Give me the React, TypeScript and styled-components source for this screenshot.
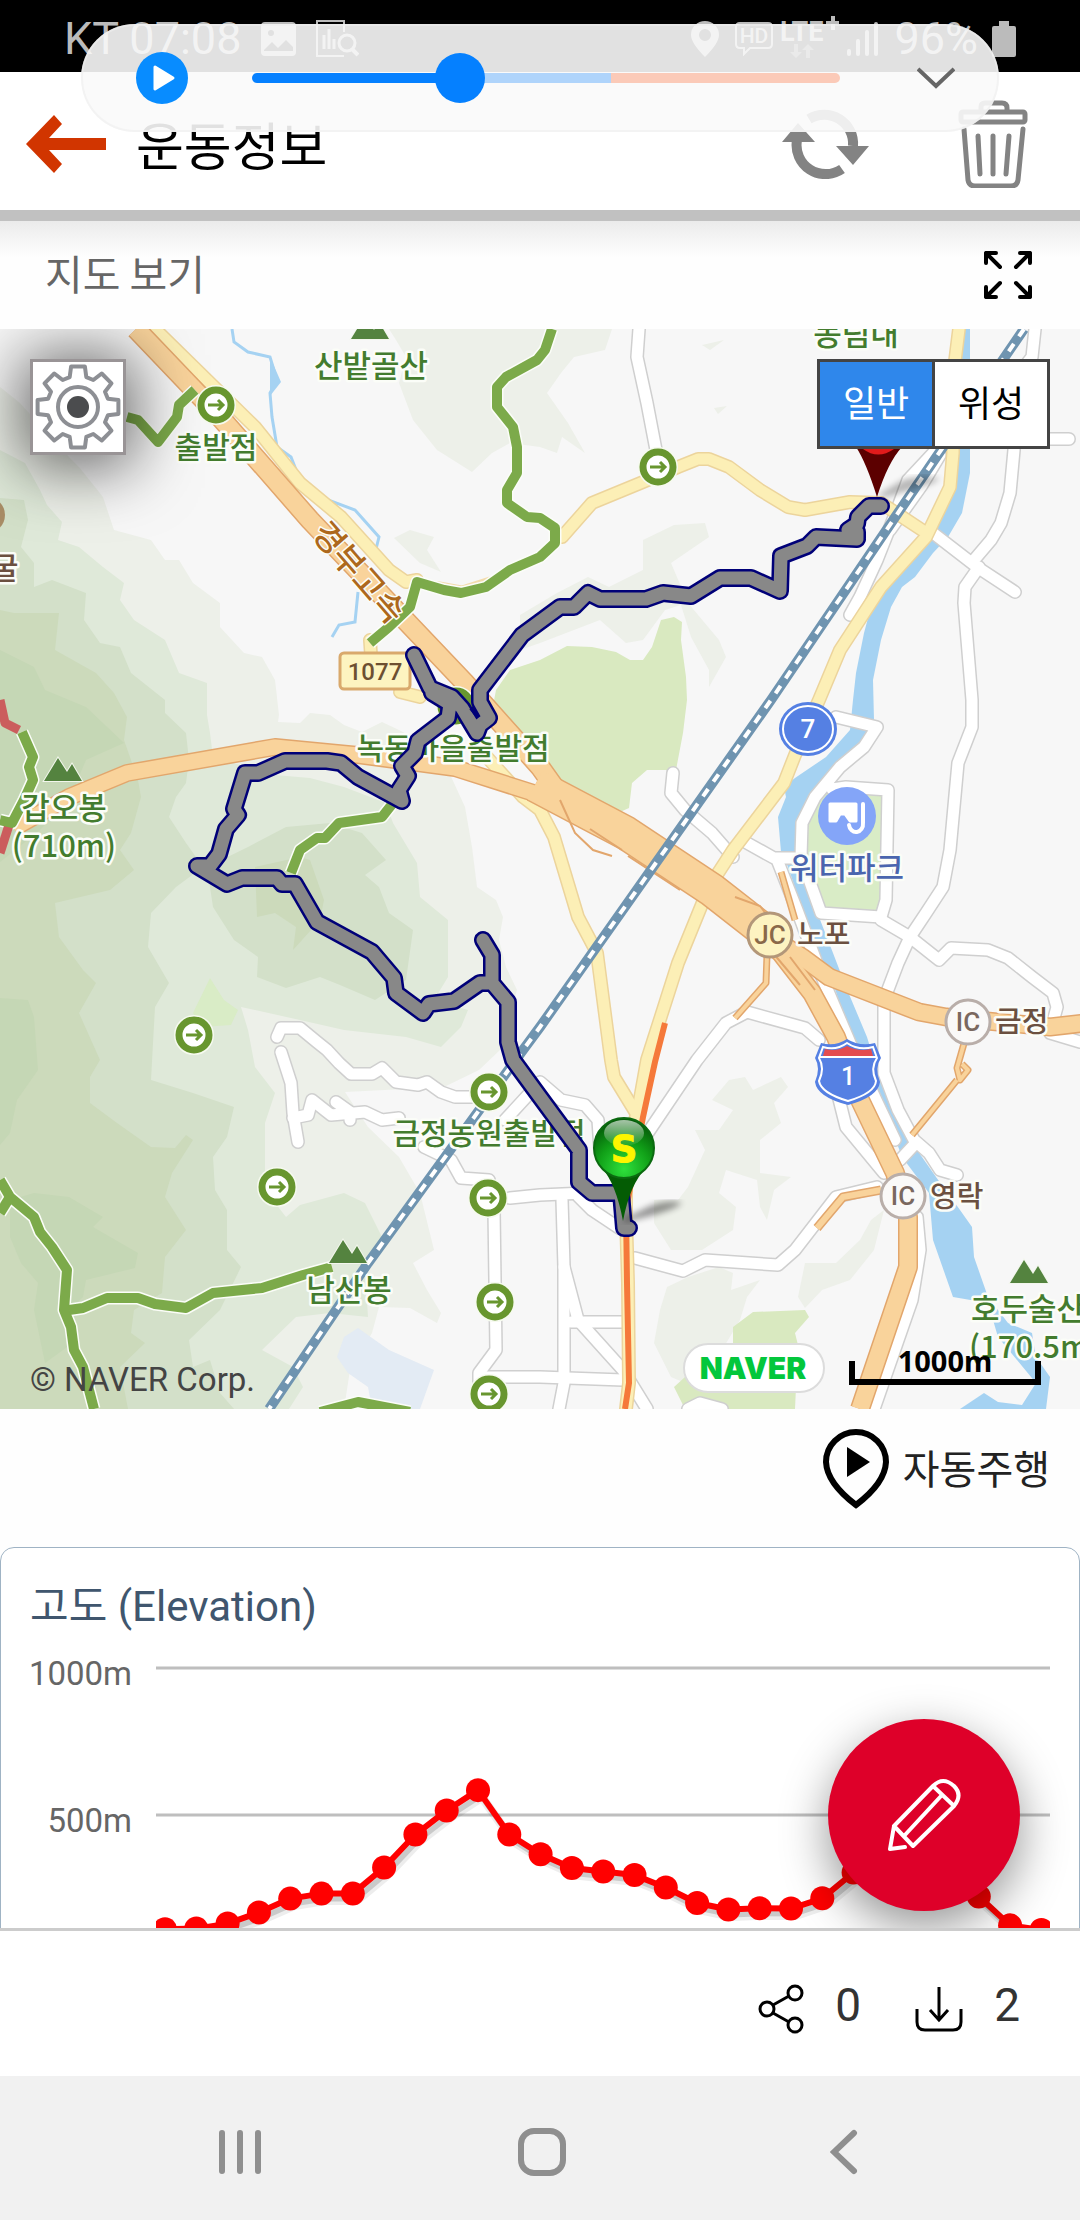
import React, { useState } from 'react';
import styled, { createGlobalStyle } from 'styled-components';

const SANS = `Roboto, "Noto Sans CJK KR", sans-serif`;
const KOREAN = `"Noto Sans CJK KR", Roboto, sans-serif`;

const GlobalStyle = createGlobalStyle`
  * { box-sizing: border-box; }
  body { margin: 0; background: #fefefe; font-family: ${SANS}; color: #222; }
  button { font: inherit; color: inherit; background: none; border: 0; padding: 0; cursor: pointer; }
  svg { display: block; flex: none; }
`;

/* ---------- layout ---------- */

const Screen = styled.div`
  position: relative;
  display: flex;
  flex-direction: column;
  height: 100vh;
  overflow: hidden;
`;

const StatusBar = styled.div`
  display: flex;
  justify-content: space-between;
  align-items: center;
  height: 72px;
  flex: none;
  padding: 6px 64px 0;
  background: #000;
  color: #bbb;
  font-size: 45px;
  line-height: 48px;
`;

const StatusGroup = styled.div<{ $gap: number }>`
  display: flex;
  align-items: center;
  gap: ${(p) => p.$gap}px;
`;

const Player = styled.div`
  position: absolute;
  z-index: 5;
  top: 24px;
  left: 81px;
  right: 81px;
  height: 108px;
  display: flex;
  align-items: center;
  padding: 0 44px 0 55px;
  border-radius: 54px;
  background: rgba(250, 250, 250, 0.9);
  box-shadow: inset 0 0 0 2px rgba(238, 238, 238, 0.6);
`;

const Seek = styled.input`
  flex: 1;
  min-width: 0;
  height: 50px;
  margin: 0 77px 0 64px;
  background: none;
  appearance: none;
  &::-webkit-slider-runnable-track {
    height: 10px;
    border-radius: 5px;
    background: linear-gradient(to right, #0580ff 36%, #afd4fb 36%, #afd4fb 61%, #fbcab8 61%);
  }
  &::-webkit-slider-thumb {
    appearance: none;
    width: 50px;
    height: 50px;
    margin-top: -20px;
    border-radius: 50%;
    background: #0580ff;
  }
`;

const Header = styled.header`
  display: flex;
  align-items: center;
  flex: none;
  height: 149px;
  padding: 6px 52px 0 26px;
  border-bottom: 11px solid #c1c1c1;
  background: #fff;
`;

const Title = styled.h1`
  flex: 1;
  margin: 0 0 0 30px;
  font: 400 52px/60px ${KOREAN};
  color: #000;
`;

const HeaderActions = styled.div`
  display: flex;
  align-items: center;
  gap: 89px;
`;

const Content = styled.main`
  position: relative;
  flex: 1;
  min-height: 0;
  overflow: hidden;
  background: linear-gradient(#ebebeb, #fefefe 36px);
`;

const SectionBar = styled.div`
  display: flex;
  align-items: center;
  justify-content: space-between;
  height: 108px;
  padding: 0 48px 0 45px;
`;

const SectionTitle = styled.h2`
  margin: 0;
  padding-bottom: 6px;
  font: 400 41px/48px ${KOREAN};
  color: #666;
`;

const MapFrame = styled.section`
  position: relative;
  overflow: hidden;
  aspect-ratio: 1;
  background: #f7f7f7;
`;

const GearButton = styled.button`
  && { border: 3px solid #999496; background: #fff; }
  position: absolute;
  top: 30px;
  left: 30px;
  width: 96px;
  height: 96px;
  box-shadow: 0 4px 64px 8px rgba(0, 0, 0, 0.6);
`;

const MapTypes = styled.div`
  position: absolute;
  top: 30px;
  right: 30px;
  display: flex;
  gap: 3px;
  border: 3px solid #444;
  background: #444;
`;

const MapType = styled.button<{ $on?: boolean }>`
  width: 112px;
  height: 84px;
  && {
    padding-bottom: 6px;
    background: ${(p) => (p.$on ? '#2f87eb' : '#fff')};
    color: ${(p) => (p.$on ? '#fff' : '#000')};
    font: 400 36px/48px ${KOREAN};
  }
`;

const Copyright = styled.div`
  position: absolute;
  left: 30px;
  bottom: 9px;
  font-size: 33px;
  line-height: 40px;
  color: #444;
`;

const AutoRow = styled.div`
  display: flex;
  justify-content: flex-end;
  padding: 20px 30px 38px;
`;

const AutoButton = styled.button`
  display: flex;
  align-items: center;
  gap: 14px;
  && { font: 400 40px/80px ${KOREAN}; }
  span { margin-bottom: 4px; line-height: 76px; }
`;

const Card = styled.section`
  height: 460px;
  padding-top: 33px;
  border: 1px solid #9fb3c4;
  border-radius: 14px;
  background: #fff;
`;

const CardTitle = styled.h2`
  margin: 0 0 0 29px;
  font: 400 42px/52px ${SANS};
  color: #40566e;
`;

const ChartSvg = styled.svg`
  width: 100%;
  height: auto;
`;

const EditButton = styled.button`
  position: absolute;
  right: 60px;
  bottom: 17px;
  width: 192px;
  height: 192px;
  display: grid;
  place-items: center;
  && { border-radius: 50%; background: #de0029; }
  box-shadow: 0 16px 48px rgba(0, 0, 0, 0.42);
`;

const Footer = styled.footer`
  display: flex;
  justify-content: flex-end;
  align-items: center;
  gap: 54px;
  flex: none;
  height: 148px;
  padding: 10px 60px 0 0;
  border-top: 3px solid #ccc;
  background: #fff;
`;

const Count = styled.button`
  display: flex;
  align-items: center;
  gap: 31px;
  && { font-size: 46px; line-height: 56px; color: #333; }
  span { margin-bottom: 8px; }
`;

const SystemNav = styled.nav`
  display: grid;
  grid-template-columns: repeat(3, 1fr);
  place-items: center;
  flex: none;
  height: 144px;
  padding: 8px 85px 0 89px;
  background: #f1f1f1;
`;

/* ---------- map ---------- */

type P = { d: string; c: string };

const AREAS: P[] = [
  { c: '#edf0e9', d: 'M0 387L20 403L69 457L79 467L103 497L114 530L151 540L165 560L179 560L193 583L220 603L220 627L244 653L262 657L275 680L279 715L278 722L300 723L310 713L330 715L344 725L362 732L382 722L399 730L424 743L448 770L465 807L472 847L477 887L496 900L503 917L499 940L506 967L517 990L500 1050L479 1070L444 1087L345 1092L368 1127L399 1157L420 1193L434 1250L413 1263L427 1290L441 1313L437 1323L410 1308L379 1307L372 1333L350 1370L344 1409L0 1409Z' },
  { c: '#dfe9d9', d: 'M0 450L25 463L40 490L47 505L62 522L58 540L79 547L103 567L124 583L120 600L134 620L165 640L179 673L207 683L207 715L210 733L213 757L275 775L310 778L344 787L386 803L393 823L417 863L420 897L448 920L448 977L434 1000L468 1010L461 1027L441 1047L406 1037L344 1030L300 1020L241 1007L248 1030L255 1067L275 1093L265 1123L265 1190L286 1217L300 1205L344 1193L365 1203L382 1237L365 1270L368 1317L330 1313L296 1317L262 1350L293 1367L303 1387L289 1409L0 1409Z' },
  { c: '#d3e0c9', d: 'M0 498L24 500L28 520L21 547L34 563L34 587L52 580L86 593L84 620L100 643L120 647L131 673L165 700L165 713L186 733L189 760L186 783L176 797L169 817L186 843L203 867L176 887L151 913L148 947L169 983L155 1007L151 1080L193 1093L234 1107L227 1137L213 1157L215 1190L227 1210L227 1250L241 1267L220 1310L189 1340L193 1367L210 1360L220 1393L234 1409L0 1409Z' },
  { c: '#d3e0c9', d: 'M207 867L213 907L234 940L258 957L257 977L286 988L320 977L340 985L375 1000L406 980L413 930L389 913L379 887L365 875L386 860L362 833L330 823L286 827L248 847Z' },
  { c: '#ccdabb', d: 'M0 610L14 613L59 613L55 650L96 673L114 693L127 717L124 740L138 780L141 797L131 833L120 850L134 870L110 890L55 903L59 937L83 970L96 983L79 1013L100 1060L90 1077L90 1103L117 1123L151 1147L175 1148L186 1135L193 1140L172 1173L165 1197L186 1230L165 1257L162 1293L134 1310L131 1333L145 1343L120 1367L128 1409L0 1409Z' },
  { c: '#ccdabb', d: 'M255 867L300 857L310 860L324 900L320 920L293 950L296 927L275 913L257 917Z' },
  { c: '#c5d7b5', d: 'M0 650L34 667L45 690L86 707L124 743L86 760L69 800L40 830L0 862Z' },
  { c: '#c5d7b5', d: 'M0 998L28 1000L34 1017L38 1070L17 1100L10 1133L0 1145Z' },
  { c: '#c5d7b5', d: 'M10 1200L34 1193L69 1197L103 1217L93 1227L138 1253L135 1268L86 1280L83 1297L62 1317L70 1345L45 1363L34 1310L38 1283L21 1263L10 1237Z' },
  { c: '#edf0e9', d: 'M389 329L396 340L406 357L399 383L413 420L437 450L472 472L492 453L510 443L540 447L557 453L562 437L585 453L568 423L547 393L561 373L574 357L605 350L612 329Z' },
  { c: '#edf0e9', d: 'M394 538L410 530L434 537L427 550L441 572L420 563Z' },
  { c: '#edf0e9', d: 'M643 540L674 525L705 523L709 537L671 563L688 603L719 640L726 657L709 687L709 670L691 637L681 605L665 610L643 640L626 643L600 620L540 643L520 650L520 615L557 593L588 577L609 587L643 570Z' },
  { c: '#edf0e9', d: 'M702 345L724 340L710 350Z M714 408L727 406L718 414Z' },
  { c: '#d9e9c0', d: 'M496 690L510 670L540 660L567 646L592 647L616 652L630 660L643 660L652 647L661 620L674 617L682 622L681 640L686 677L687 700L683 733L676 770L647 770L632 783L629 808L609 817L588 797L557 783L540 767L490 722Z' },
  { c: '#d9ecc6', d: 'M822 793H884L884 875L877 912L822 910L805 860V833Z' },
  { c: '#edf0e9', d: 'M688 1277L719 1267L733 1273L731 1290L760 1280L747 1297L740 1320L725 1345L690 1385L671 1377L654 1343L660 1310L667 1287Z' },
  { c: '#edf0e9', d: 'M729 1080L745 1077L753 1090L781 1077L788 1087L774 1103L781 1123L760 1140L760 1173L791 1177L774 1190L767 1220L760 1207L757 1180L726 1170L719 1193L736 1207L733 1230L702 1250L671 1250L654 1223V1200L678 1200L688 1187L705 1150L695 1130L719 1130L733 1110L712 1100Z' },
  { c: '#edf0e9', d: 'M798 1297L805 1263L836 1263L860 1240L871 1220L884 1210L874 1250L850 1280L822 1290L805 1308Z' },
  { c: '#d9e9c0', d: 'M733 1327L753 1312L805 1310L809 1317L795 1333L798 1345L795 1409H685L674 1387L685 1377L700 1350L733 1345Z' },
  { c: '#e3ebf4', d: 'M337 1357L344 1337L358 1328L389 1350L434 1370L420 1409H372L368 1387L348 1373Z' },
  { c: '#d9ecc6', d: 'M210 978L224 1000L238 1010L231 1025L203 1027L193 1013Z' },
  { c: '#a5d2f2', d: 'M960 329H970L970 473L962 513L948 537L933 553L915 577L902 587L891 607L881 640L873 680L874 720L864 740L833 770L809 800L798 827L795 863L803 880L819 917L833 953L846 987L867 1037L881 1083L907 1137L922 1157L936 1177L960 1210L972 1227L974 1257L988 1297L1008 1323L1032 1333L1036 1357L1050 1377L1046 1409H960L984 1393L998 1402L1022 1405L1036 1383L998 1337L988 1303L953 1297L933 1240L929 1193L902 1157L876 1087L853 1043L833 983L815 947L788 867L781 852L778 817L786 797L784 787L795 778L826 757L850 730L853 700L856 673L864 633L871 607L881 587L915 545L950 487Z' },
];

const STREAMS = [
  'M232 329L234 342L248 352L270 357L277 380L270 393L272 417L277 447L291 457L300 480L320 497L355 510L379 537L375 553',
  'M358 592L355 622L339 625L332 637',
];

const WHITE_ROADS = [
  'M639 329L637 357L647 403L656 450',
  'M1035 329L1032 357L1014 380V450L1010 493L1001 523L991 540L974 560',
  'M1040 439H1069',
  'M933 533L977 567L1015 592',
  'M979 567L965 587L964 603L972 700V727L958 763L950 850L943 887L926 913L910 937L898 963L884 1000V1073L898 1110L914 1140L929 1153L940 1170L957 1175',
  'M914 1145L900 1160',
  'M936 450L908 480L898 507L877 560L860 597L850 615',
  'M940 455L922 485L890 530',
  'M836 717L877 727L864 747L840 767L815 797L802 823L801 857L821 913L881 917L886 900L888 790L846 787L832 789',
  'M673 773L671 793L685 810L712 833L733 857',
  'M747 843L774 858H795',
  'M778 862L797 910L822 977L850 1043L876 1100L895 1140',
  'M881 920L910 937L939 960L951 948L988 950L1008 958L1032 977L1053 993L1057 1007L1050 1033L1080 1042',
  'M819 1040L805 1028L747 1012L726 1023L697 1060L643 1140',
  'M838 1095L846 1127L884 1173',
  'M635 1258L683 1271L705 1260L778 1265L795 1250L836 1197L877 1187',
  'M917 1217L920 1250L912 1300L874 1409',
  'M510 1198L540 1195L585 1193',
  'M578 1196L592 1210L619 1228',
  'M562 1200L564 1267V1383L559 1409',
  'M564 1267L578 1320L623 1370L647 1409',
  'M571 1322H623',
  'M482 1377H540L623 1380',
  'M494 1210L496 1350L479 1373V1390',
  'M424 1147L451 1160L461 1178L489 1180',
  'M277 1037L281 1028L300 1028L317 1042L327 1050L339 1063L351 1074H372L382 1068L396 1082L418 1085L427 1082L441 1092L455 1097H472',
  'M281 1052L291 1083L293 1113L298 1142',
  'M293 1118L308 1115L312 1100L331 1115L365 1112L382 1120L399 1118',
  'M336 1102L350 1112V1120',
  'M505 1120L540 1082L561 1100L585 1105L598 1120L600 1150',
  'M688 1409L700 1403L722 1409',
];

const YELLOW_ROADS = [
  'M155 329L255 427L300 483L341 517L389 570L406 582L417 580',
  'M562 537L592 503L643 482L678 467L698 459H709L729 467L760 490L788 507L805 510L850 502L881 503L922 530',
  'M959 329L953 377V453L950 487L926 537L881 587L840 650L819 700L797 750L784 783L733 850L709 887L678 963L647 1060L638 1110L626 1150V1217L628 1283L629 1383L626 1409',
  'M485 755L523 797L540 810L554 837L578 917L597 953L611 1060L614 1077L636 1113',
  'M370 640L371 655',
  'M400 692L420 697',
];

const HIGHWAYS: { d: string; w: number }[] = [
  { d: 'M767 955L766 983L735 1018', w: 4 },
  { d: 'M781 872L795 920', w: 4 },
  { d: 'M965 1040L957 1068L960 1080L968 1070L962 1064M957 1080L912 1135', w: 4 },
  { d: 'M881 1190L843 1197L817 1228', w: 6 },
  { d: 'M14 828L69 797L127 773L275 747L358 755L455 768L540 795', w: 15 },
  { d: 'M136 329L220 417L310 520L465 683L540 767L560 795', w: 18 },
  { d: 'M535 785L626 833L712 890L767 933', w: 32 },
  { d: 'M752 925L802 957L829 977L919 1012L946 1017L1050 1027L1085 1023', w: 16 },
  { d: 'M755 930L781 953L812 993L836 1037L860 1100L895 1173L908 1217V1267L860 1409', w: 17 },
];

const TRAILS = [
  'M127 417L138 420L158 442L177 417L179 405L195 390',
  'M552 329L545 350L537 360L506 377L497 387V407L513 427L517 447V473L507 490V503L527 517L540 518L555 528V543L540 557L510 570L486 587L461 593L444 590L417 582L410 607L389 627L370 643',
  'M291 873L300 850L317 838H325L339 823L382 817L393 803',
  'M22 732L33 757L29 767L33 780L24 800L12 823L0 820',
  'M0 1180L10 1197L34 1217L40 1232L52 1247L67 1270L64 1310L71 1327L74 1350L83 1367L94 1409',
  'M0 1213L10 1197',
  'M69 1310L83 1308L107 1298H138L155 1304L186 1308L213 1293L262 1288L303 1275L332 1267',
  'M320 1412L358 1402L410 1412',
];

const RED_TRAILS = ['M0 700L5 723L19 730', 'M9 825L0 853'];

const RAILWAY = 'M1024 329L900 510L771 700L540 1027L523 1050L368 1263L269 1409';

const ROUTE =
  'M881 506H869L858 517L857 524L848 530M856 537L857 539L816 537L807 546L781 556L780 591L751 578H720L691 596L663 593L646 599H600L588 593L574 607H560L522 635L480 690V702L489 718L480 725L477 733L462 708L452 697L430 688L414 655' +
  'M432 693L450 704L448 718L418 741L415 753L402 766L408 776L399 790L402 801L358 777L341 763L327 761H285L258 773H245L234 809L238 815L226 829L219 854L210 866H197L227 884L242 878H277L282 884H295L317 922L372 952L394 978L396 993L423 1013L429 1004L454 1001L480 983H491' +
  'M483 940L492 955V983L508 1002V1042L513 1060L540 1097L579 1150V1182L592 1193H621L624 1228H629M848 530L857 532V538';

const GREEN = '#437c2e';
const BROWN = '#6b5040';

const LABELS: { t: string; x: number; y: number; c: string; s?: number; a?: 'start' | 'middle' }[] = [
  { t: '산밭골산', x: 371, y: 377, c: GREEN },
  { t: '출발점', x: 216, y: 458, c: GREEN, s: 30 },
  { t: '동림내', x: 856, y: 345, c: GREEN },
  { t: '굴', x: -10, y: 579, c: BROWN, a: 'start' },
  { t: '갑오봉', x: 64, y: 819, c: GREEN },
  { t: '(710m)', x: 64, y: 857, c: GREEN },
  { t: '녹동마을출발점', x: 453, y: 759, c: GREEN, s: 30 },
  { t: '워터파크', x: 847, y: 879, c: '#4a65ae' },
  { t: '노포', x: 797, y: 945, c: BROWN, s: 29, a: 'start' },
  { t: '금정', x: 995, y: 1032, c: BROWN, s: 29, a: 'start' },
  { t: '영락', x: 930, y: 1207, c: BROWN, s: 29, a: 'start' },
  { t: '금정농원출발점', x: 489, y: 1144, c: GREEN, s: 30 },
  { t: '남산봉', x: 349, y: 1301, c: GREEN },
  { t: '호두술산', x: 971, y: 1320, c: GREEN, a: 'start' },
  { t: '(170.5m)', x: 969, y: 1358, c: GREEN, a: 'start' },
];

const TRAILHEADS = [[216, 405], [456, 706], [658, 467], [194, 1035], [277, 1187], [489, 1092], [488, 1198], [495, 1302], [489, 1394]];
const PEAKS = [[370, 339], [63, 781], [348, 1263], [1029, 1283]];

const MapText = styled.text`
  font-family: ${KOREAN};
  font-weight: 500;
  paint-order: stroke;
  stroke: #fbfdf8;
  stroke-linejoin: round;
`;

const BadgeText = styled.text`
  font-family: ${SANS};
  font-weight: 500;
  text-anchor: middle;
`;

function Road({ d, w, fill, edge }: { d: string[]; w: number; fill: string; edge: string }) {
  return (
    <g fill="none" strokeLinejoin="round" strokeLinecap="round">
      {d.map((p) => <path key={p} d={p} stroke={edge} strokeWidth={w + 3} />)}
      {d.map((p) => <path key={p} d={p} stroke={fill} strokeWidth={w} />)}
    </g>
  );
}

function Junction({ x, y, t, fill, edge, c }: { x: number; y: number; t: string; fill: string; edge: string; c: string }) {
  return (
    <g>
      <circle cx={x} cy={y} r={22} fill={fill} stroke={edge} strokeWidth={3} />
      <BadgeText x={x} y={y + 9} fontSize={26} fill={c}>{t}</BadgeText>
    </g>
  );
}

function CourseMap() {
  return (
    <svg width="100%" height="100%" viewBox="0 329 1080 1080" role="img" aria-label="운동 경로 지도">
      <defs>
        <radialGradient id="pin" cx="0.5" cy="0.85" r="0.8">
          <stop offset="0" stopColor="#2ee03c" />
          <stop offset="0.55" stopColor="#11a018" />
          <stop offset="1" stopColor="#045c08" />
        </radialGradient>
        <linearGradient id="gloss" x1="0" y1="0" x2="0" y2="1">
          <stop offset="0" stopColor="#fff" stopOpacity="0.65" />
          <stop offset="1" stopColor="#fff" stopOpacity="0.05" />
        </linearGradient>
        <filter id="soft"><feGaussianBlur stdDeviation="3" /></filter>
      </defs>
      {AREAS.map((a) => <path key={a.d} d={a.d} fill={a.c} />)}
      <g fill="none" stroke="#a5d2f2" strokeWidth={3}>{STREAMS.map((s) => <path key={s} d={s} />)}</g>
      <path d="M270 357L281 382L270 396Z" fill="#a5d2f2" />
      <Road d={WHITE_ROADS} w={11} fill="#fff" edge="#cfcfcf" />
      <Road d={YELLOW_ROADS} w={11} fill="#fcefb6" edge="#ecd49c" />
      <path d="M417 580L440 583L462 587L490 578" fill="none" stroke="#f3dcae" strokeWidth={3} />
      <path d="M665 1023L655 1062L643 1117L626 1210L627 1283L629 1383L625 1409" fill="none" stroke="#f5793a" strokeWidth={6} />
      <g fill="none" strokeLinejoin="round">
        {HIGHWAYS.map((h) => <path key={h.d} d={h.d} stroke="#e2a66c" strokeWidth={h.w + 3} />)}
        {HIGHWAYS.map((h) => <path key={h.d} d={h.d} stroke="#f9d39b" strokeWidth={h.w} />)}
      </g>
      <path d="M560 800L575 833L593 850L612 856M590 829L622 850M628 856L680 890M735 897L760 906L767 915M773 953L800 985M790 957L815 990" fill="none" stroke="#e2a66c" strokeWidth={2} />
      <path d={RAILWAY} fill="none" stroke="#6f94b0" strokeWidth={10} />
      <path d={RAILWAY} fill="none" stroke="#fff" strokeWidth={4} strokeDasharray="9 9" />
      <g fill="none" strokeLinejoin="round">
        {TRAILS.map((t) => <path key={t} d={t} stroke="#fbfdf8" strokeWidth={13} />)}
        {RED_TRAILS.map((t) => <path key={t} d={t} stroke="#cb5d5d" strokeWidth={9} />)}
        {TRAILS.map((t) => <path key={t} d={t} stroke="#7caa4a" strokeWidth={10} />)}
      </g>
      {TRAILHEADS.map(([x, y]) => (
        <g key={`${x}-${y}`} transform={`translate(${x} ${y})`} fill="none">
          <circle r={15} fill="#fff" stroke="#f6faef" strokeWidth={10} />
          <circle r={15} fill="#fff" stroke="#68962f" strokeWidth={7} />
          <path d="M-8 0H7M2 -5L7 0L2 5" stroke="#68962f" strokeWidth={3} />
        </g>
      ))}
      {PEAKS.map(([x, y]) => (
        <path key={x} d={`M${x - 19} ${y}L${x - 5} ${y - 23}L${x + 4} ${y - 9}L${x + 9} ${y - 17}L${x + 19} ${y}Z`} fill="#54833f" stroke="#f2f6ec" strokeWidth={2} paintOrder="stroke" />
      ))}
      <circle cx={-13} cy={515} r={18} fill="#a98d66" />
      <g>
        {LABELS.map((l) => (
          <MapText key={l.t} x={l.x} y={l.y} fill={l.c} fontSize={l.s ?? 31} textAnchor={l.a ?? 'middle'} strokeWidth={5}>{l.t}</MapText>
        ))}
        <MapText transform="translate(350 580) rotate(49)" fontSize={33} fill="#ad681c" textAnchor="middle" strokeWidth={3}>경부고속</MapText>
      </g>
      <rect x={340} y={653} width={70} height={36} rx={4} fill="#fdf4c0" stroke="#d9a96c" strokeWidth={3} />
      <BadgeText x={375} y={680} fontSize={24} fill="#6d4f30">1077</BadgeText>
      <ellipse cx={808} cy={729} rx={29} ry={27} fill="#5580e3" />
      <ellipse cx={808} cy={729} rx={25} ry={23} fill="#5580e3" stroke="#fff" strokeWidth={2} />
      <BadgeText x={808} y={738} fontSize={26} fill="#fff">7</BadgeText>
      <circle cx={847} cy={816} r={29} fill="#84a5f8" />
      <path d="M830 804H856V821H850L845 814H840L836 821H830Z" fill="#fff" stroke="#fff" strokeWidth={3} strokeLinejoin="round" />
      <path d="M863 804V823A7 8 0 0 1 849 825" fill="none" stroke="#fff" strokeWidth={4} strokeLinecap="round" />
      <Junction x={770} y={935} t="JC" fill="#fdf3c1" edge="#b39779" c="#8a6949" />
      <Junction x={968} y={1022} t="IC" fill="#faf9f8" edge="#b9aea9" c="#7a685f" />
      <Junction x={903} y={1196} t="IC" fill="#faf9f8" edge="#b9aea9" c="#7a685f" />
      <path d="M821 1043Q835 1047 847 1039Q860 1047 875 1043L881 1058Q874 1068 880 1082Q878 1097 848 1105Q817 1097 815 1082Q821 1068 815 1058Z" fill="#5580e3" />
      <path d="M823 1047Q836 1051 847 1043Q859 1051 873 1047L877 1058Q870 1068 876 1081Q875 1093 848 1101Q821 1093 819 1081Q825 1068 819 1058Z" fill="#5580e3" stroke="#fff" strokeWidth={2} />
      <path d="M825 1049Q837 1052 847 1046Q858 1052 871 1049L873 1056H823Z" fill="#e34c50" />
      <path d="M820 1057H876" stroke="#fff" strokeWidth={2} />
      <BadgeText x={848} y={1085} fontSize={25} fill="#fff">1</BadgeText>

      <g fill="none" strokeLinejoin="round" strokeLinecap="round">
        <path d={ROUTE} stroke="#000078" strokeWidth={18} />
        <path d={ROUTE} stroke="#888" strokeWidth={13} />
      </g>
      <path d="M471 708L478 717" stroke="#000078" strokeWidth={4} />

      <path d="M880 494L905 479Q925 474 940 479Q925 488 880 498Z" fill="#000" opacity={0.28} filter="url(#soft)" />
      <path d="M856 447Q866 462 877 497Q888 462 902 447Z" fill="#5c0000" />
      <path d="M863 449Q878 460 894 449Z" fill="#e01b1b" />
      <path d="M624 1219L650 1206Q670 1199 682 1203Q672 1212 624 1222Z" fill="#000" opacity={0.4} filter="url(#soft)" />
      <path d="M602 1168Q616 1184 623 1221Q630 1184 646 1168Z" fill="#045c04" />
      <circle cx={624} cy={1148} r={30} fill="url(#pin)" stroke="#0b6a10" strokeWidth={2} />
      <ellipse cx={624} cy={1133} rx={20} ry={13} fill="url(#gloss)" />
      <text x={624} y={1162} textAnchor="middle" fontFamily="DejaVu Sans, sans-serif" fontWeight={700} fontSize={37} fill="#fdf500" stroke="#fdf500" strokeWidth={1}>S</text>

      <rect x={684} y={1344} width={140} height={48} rx={24} fill="#fff" stroke="#dcdcdc" strokeWidth={2} />
      <text x={753} y={1379} textAnchor="middle" fontFamily="Inter, sans-serif" fontWeight={900} fontSize={30} fill="#03c73c">NAVER</text>
      <path d="M852 1361V1382H1038V1361" fill="none" stroke="#000" strokeWidth={6} />
      <text x={945} y={1372} textAnchor="middle" fontFamily="Noto Sans, sans-serif" fontWeight={700} fontSize={29}>1000m</text>
    </svg>
  );
}

/* ---------- chart ---------- */

const ELEVATION = [115, 117, 134, 172, 219, 236, 236, 325, 437, 519, 588, 437, 370, 323, 311, 299, 257, 204, 182, 186, 185, 220, 308, 376, 400, 332, 226, 128, 112];
const points = ELEVATION.map((m, i) => ({ x: 165 + i * 31.3, y: 330 - m * 0.294 }));
const line = points.map((p) => `${p.x},${p.y}`).join(' ');

function ElevationChart() {
  return (
    <ChartSvg viewBox="1 0 1078 296" role="img" aria-label="고도 차트">
      <defs><clipPath id="plot"><rect x={156} y={0} width={894} height={296} /></clipPath></defs>
      <g stroke="#bebebe" strokeWidth={3}>
        <path d="M156 35H1050" />
        <path d="M156 182H1050" />
      </g>
      <g fontFamily={SANS} fontSize={33} fill="#666" textAnchor="end">
        <text x={132} y={52}>1000m</text>
        <text x={132} y={199}>500m</text>
      </g>
      <g clipPath="url(#plot)">
        <g fill="none" stroke="#000" strokeLinejoin="round">
          <polyline points={line} strokeWidth={9} opacity={0.07} transform="translate(4 7)" />
          <polyline points={line} strokeWidth={6} opacity={0.15} transform="translate(3 5)" />
        </g>
        <polyline points={line} fill="none" stroke="#f00" strokeWidth={6} strokeLinejoin="round" />
        {points.map((p) => <circle key={p.x} cx={p.x} cy={p.y} r={12} fill="#f00" />)}
      </g>
    </ChartSvg>
  );
}

/* ---------- icons ---------- */

const gearPath = (() => {
  const out: string[] = [];
  for (let i = 0; i < 8; i++) {
    const base = (i * Math.PI) / 4;
    [[-0.27, 31], [-0.17, 41], [0.17, 41], [0.27, 31]].forEach(([a, r]) => {
      out.push(`${(45 + r * Math.sin(base + a)).toFixed(1)} ${(45 - r * Math.cos(base + a)).toFixed(1)}`);
    });
  }
  return `M${out.join('L')}Z`;
})();

const GearIcon = () => (
  <svg width={90} height={90} viewBox="0 0 90 90" fill="none" stroke="#8d8f94" strokeWidth={4} strokeLinejoin="round">
    <path d={gearPath} />
    <circle cx={45} cy={45} r={20} />
    <circle cx={45} cy={45} r={11} fill="#4b4c4e" stroke="none" />
  </svg>
);

const StatusIconsLeft = () => (
  <>
    <svg width={35} height={34} viewBox="0 0 35 34">
      <path fillRule="evenodd" fill="#bbb" d="M4 0H31Q35 0 35 4V30Q35 34 31 34H4Q0 34 0 30V4Q0 0 4 0ZM3 28V31H32V25L25 18L17 26L11 20ZM10 8A3 3 0 1 0 10 14A3 3 0 1 0 10 8Z" />
      <path fill="#bbb" d="M3 29H32V32H3Z" />
    </svg>
    <svg width={43} height={38} viewBox="0 0 43 38" fill="none" stroke="#bbb" strokeWidth={2}>
      <path d="M28 12V1H1V36H28" />
      <path d="M8 15V29M13 9V29M18 19V29" strokeWidth={3} />
      <circle cx={31} cy={23} r={8} strokeWidth={3} />
      <path d="M36 29L42 35" strokeWidth={4} />
    </svg>
  </>
);

const StatusIconsRight = () => (
  <>
    <svg width={36} height={36} viewBox="0 0 36 36">
      <path fillRule="evenodd" fill="#bbb" d="M14 0A14 14 0 0 1 28 14Q28 22 14 36Q0 22 0 14A14 14 0 0 1 14 0ZM14 8A6 6 0 1 0 14 20A6 6 0 1 0 14 8Z" />
    </svg>
    <svg width={38} height={34} viewBox="0 0 38 34" fill="none" stroke="#bbb" strokeWidth={2}>
      <path d="M5 1H33Q37 1 37 5V22Q37 26 33 26H15L9 32V26H5Q1 26 1 22V5Q1 1 5 1Z" />
      <text x={19} y={21} textAnchor="middle" fontFamily="Roboto" fontWeight={500} fontSize={21} fill="#bbb" stroke="none">HD</text>
    </svg>
    <svg width={58} height={46} viewBox="0 0 58 46" fill="#bbb">
      <text x={-1} y={25} fontFamily="Roboto" fontWeight={700} fontSize={27}>LTE</text>
      <path d="M50 0H54V5H58V8H54V14H50V8H45V5H50Z" />
      <path opacity={0.5} d="M13 28H17V36H21L15 42L9 36H13ZM25 42H29V34H33L27 28L21 34H25Z" />
    </svg>
    <svg width={39} height={34} viewBox="0 0 39 34" stroke="#bbb" strokeWidth={4} strokeLinecap="round">
      <path d="M2 29V32M11 19V32M20 10V32M29 2V32" />
    </svg>
  </>
);

export default function App() {
  const [seek, setSeek] = useState(34);
  const [satellite, setSatellite] = useState(false);
  return (
    <>
      <GlobalStyle />
      <Screen>
        <StatusBar>
          <StatusGroup $gap={20}>
            <span>KT 07:08</span>
            <StatusIconsLeft />
          </StatusGroup>
          <StatusGroup $gap={8}>
            <StatusIconsRight />
            <span>96%</span>
            <svg width={30} height={36} viewBox="0 0 30 36" fill="#bbb">
              <path d="M13 0H23V5H28Q30 5 30 7V34Q30 36 28 36H8Q6 36 6 34V7Q6 5 8 5H13Z" />
            </svg>
          </StatusGroup>
        </StatusBar>

        <Player>
          <button aria-label="재생">
            <svg width={52} height={52} viewBox="0 0 52 52">
              <circle cx={26} cy={26} r={26} fill="#088cff" />
              <path d="M19 15L37 26L19 37Z" fill="#fff" stroke="#fff" strokeWidth={3} strokeLinejoin="round" />
            </svg>
          </button>
          <Seek type="range" aria-label="재생 위치" min={0} max={100} value={seek} onChange={(e) => setSeek(+e.target.value)} />
          <button aria-label="접기">
            <svg width={38} height={22} viewBox="0 0 38 22" fill="none" stroke="#666" strokeWidth={4}>
              <path d="M1 2L19 19L37 2" />
            </svg>
          </button>
        </Player>

        <Header>
          <button aria-label="뒤로">
            <svg width={80} height={58} viewBox="0 0 80 58">
              <path d="M0 29L28 0L36 9L23 23H80V35H23L36 49L28 58Z" fill="#d13500" />
            </svg>
          </button>
          <Title>운동정보</Title>
          <HeaderActions>
            <button aria-label="새로고침">
              <svg width={87} height={70} viewBox="0 0 87 70" fill="none" stroke="#838383" strokeWidth={10}>
                <path d="M27 10A29 29 0 0 1 71 37" />
                <path d="M15 31A29 29 0 0 0 60 60" />
                <path d="M54 37H87L71 56Z M0 33H33L16 14Z" fill="#838383" stroke="none" />
              </svg>
            </button>
            <button aria-label="삭제">
              <svg width={70} height={88} viewBox="0 0 70 88" fill="none" stroke="#838383" strokeWidth={5} strokeLinecap="round" strokeLinejoin="round">
                <path d="M23 11V7Q23 3 27 3H44Q49 3 49 8V11" />
                <rect x={3} y={12} width={64} height={10} rx={2} />
                <path d="M6 29L10 80Q11 86 17 86H53Q59 86 60 80L65 29M20 36L22 74M35 36V74M51 36L48 74" />
              </svg>
            </button>
          </HeaderActions>
        </Header>

        <Content>
          <SectionBar>
            <SectionTitle>지도 보기</SectionTitle>
            <button aria-label="전체 화면">
              <svg width={48} height={48} viewBox="0 0 48 48" fill="none" stroke="#000" strokeWidth={4} strokeLinecap="round" strokeLinejoin="round">
                <path d="M2 12V2H12M2 2L16 16M36 2H46V12M46 2L32 16M2 36V46H12M2 46L16 32M36 46H46V36M46 46L32 32" />
              </svg>
            </button>
          </SectionBar>

          <MapFrame>
            <CourseMap />
            <GearButton aria-label="지도 설정"><GearIcon /></GearButton>
            <MapTypes>
              <MapType $on={!satellite} onClick={() => setSatellite(false)}>일반</MapType>
              <MapType $on={satellite} onClick={() => setSatellite(true)}>위성</MapType>
            </MapTypes>
            <Copyright>© NAVER Corp.</Copyright>
          </MapFrame>

          <AutoRow>
            <AutoButton>
              <svg width={66} height={80} viewBox="0 0 66 80">
                <path d="M33 3A30 30 0 0 1 63 33Q62 54 33 76Q4 54 3 33A30 30 0 0 1 33 3Z" fill="none" stroke="#000" strokeWidth={6} />
                <path d="M24 18L47 33L24 48Z" />
              </svg>
              <span>자동주행</span>
            </AutoButton>
          </AutoRow>

          <Card>
            <CardTitle>고도 (Elevation)</CardTitle>
            <ElevationChart />
          </Card>

          <EditButton aria-label="편집">
            <svg width={74} height={74} viewBox="0 0 74 74" fill="none" stroke="#fff" strokeWidth={4} strokeLinejoin="round" strokeLinecap="round">
              <path d="M7 48L46 8Q56 -2 67 8Q76 17 67 28L26 68L7 48L3 71L18 69M46 8L67 28M55 17L17 58" />
            </svg>
          </EditButton>
        </Content>

        <Footer>
          <Count aria-label="공유">
            <svg width={46} height={50} viewBox="0 0 46 50" fill="none" stroke="#000" strokeWidth={3}>
              <circle cx={9} cy={25} r={7} />
              <circle cx={37} cy={9} r={7} />
              <circle cx={37} cy={41} r={7} />
              <path d="M15 21L31 12M15 29L31 38" />
            </svg>
            <span>0</span>
          </Count>
          <Count aria-label="다운로드">
            <svg width={48} height={46} viewBox="0 0 48 46" fill="none" stroke="#000" strokeWidth={3}>
              <path d="M24 1V33M15 24L24 34L33 24M2 23V36Q2 44 10 44H38Q46 44 46 36V23" />
            </svg>
            <span>2</span>
          </Count>
        </Footer>

        <SystemNav>
          <button aria-label="최근 앱">
            <svg width={42} height={46} viewBox="0 0 42 46" stroke="#8f8f8f" strokeWidth={6} strokeLinecap="round">
              <path d="M3 4V42M21 4V42M39 4V42" />
            </svg>
          </button>
          <button aria-label="홈">
            <svg width={48} height={48} viewBox="0 0 48 48" fill="none" stroke="#8f8f8f" strokeWidth={6}>
              <rect x={3} y={3} width={42} height={42} rx={13} />
            </svg>
          </button>
          <button aria-label="뒤로 가기">
            <svg width={28} height={46} viewBox="0 0 28 46" fill="none" stroke="#8f8f8f" strokeWidth={6} strokeLinecap="round">
              <path d="M24 4L4 23L24 42" />
            </svg>
          </button>
        </SystemNav>
      </Screen>
    </>
  );
}
